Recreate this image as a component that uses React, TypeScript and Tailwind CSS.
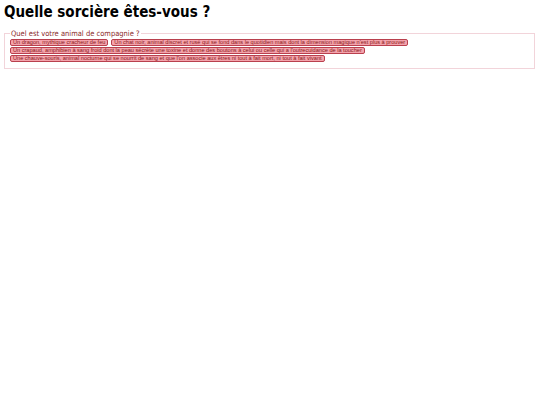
import React from "react";

const animals = [
  "Un dragon, mythique cracheur de feu",
  "Un chat noir, animal discret et rusé qui se fond dans le quotidien mais dont la dimension magique n'est plus à prouver",
  "Un crapaud, amphibien à sang froid dont la peau sécrète une toxine et donne des boutons à celui ou celle qui a l'outrecuidance de la toucher",
  "Une chauve-souris, animal nocturne qui se nourrit de sang et que l'on associe aux êtres ni tout à fait mort, ni tout à fait vivant",
];

export default function App() {
  return (
    <div className="min-h-[405px] bg-white px-1 pt-1">
      <h1 className="text-[15px] leading-[16px] font-bold text-black font-['DejaVu_Sans_Condensed','DejaVu_Sans',sans-serif]">
        Quelle sorcière êtes-vous ?
      </h1>
      <fieldset className="mt-[9px] mr-[1px] border border-[#f2d4da] px-[5px] pb-[6px]">
        <legend className="px-[1px] text-[7.5px] leading-[9px] text-[#8b2a2a] font-['DejaVu_Sans_Condensed','DejaVu_Sans',sans-serif]">
          Quel est votre animal de compagnie ?
        </legend>
        <div className="flex flex-wrap gap-x-[3px] gap-y-[1px] pt-[1px]">
          {animals.map((a) => (
            <button
              key={a}
              className="h-[7px] rounded-[2px] border border-[#b9404e] bg-[#f4a3ac] px-[2px] text-[5.6px] leading-[5px] text-[#8b1a1a] font-['Liberation_Sans',sans-serif]"
            >
              {a}
            </button>
          ))}
        </div>
      </fieldset>
    </div>
  );
}
